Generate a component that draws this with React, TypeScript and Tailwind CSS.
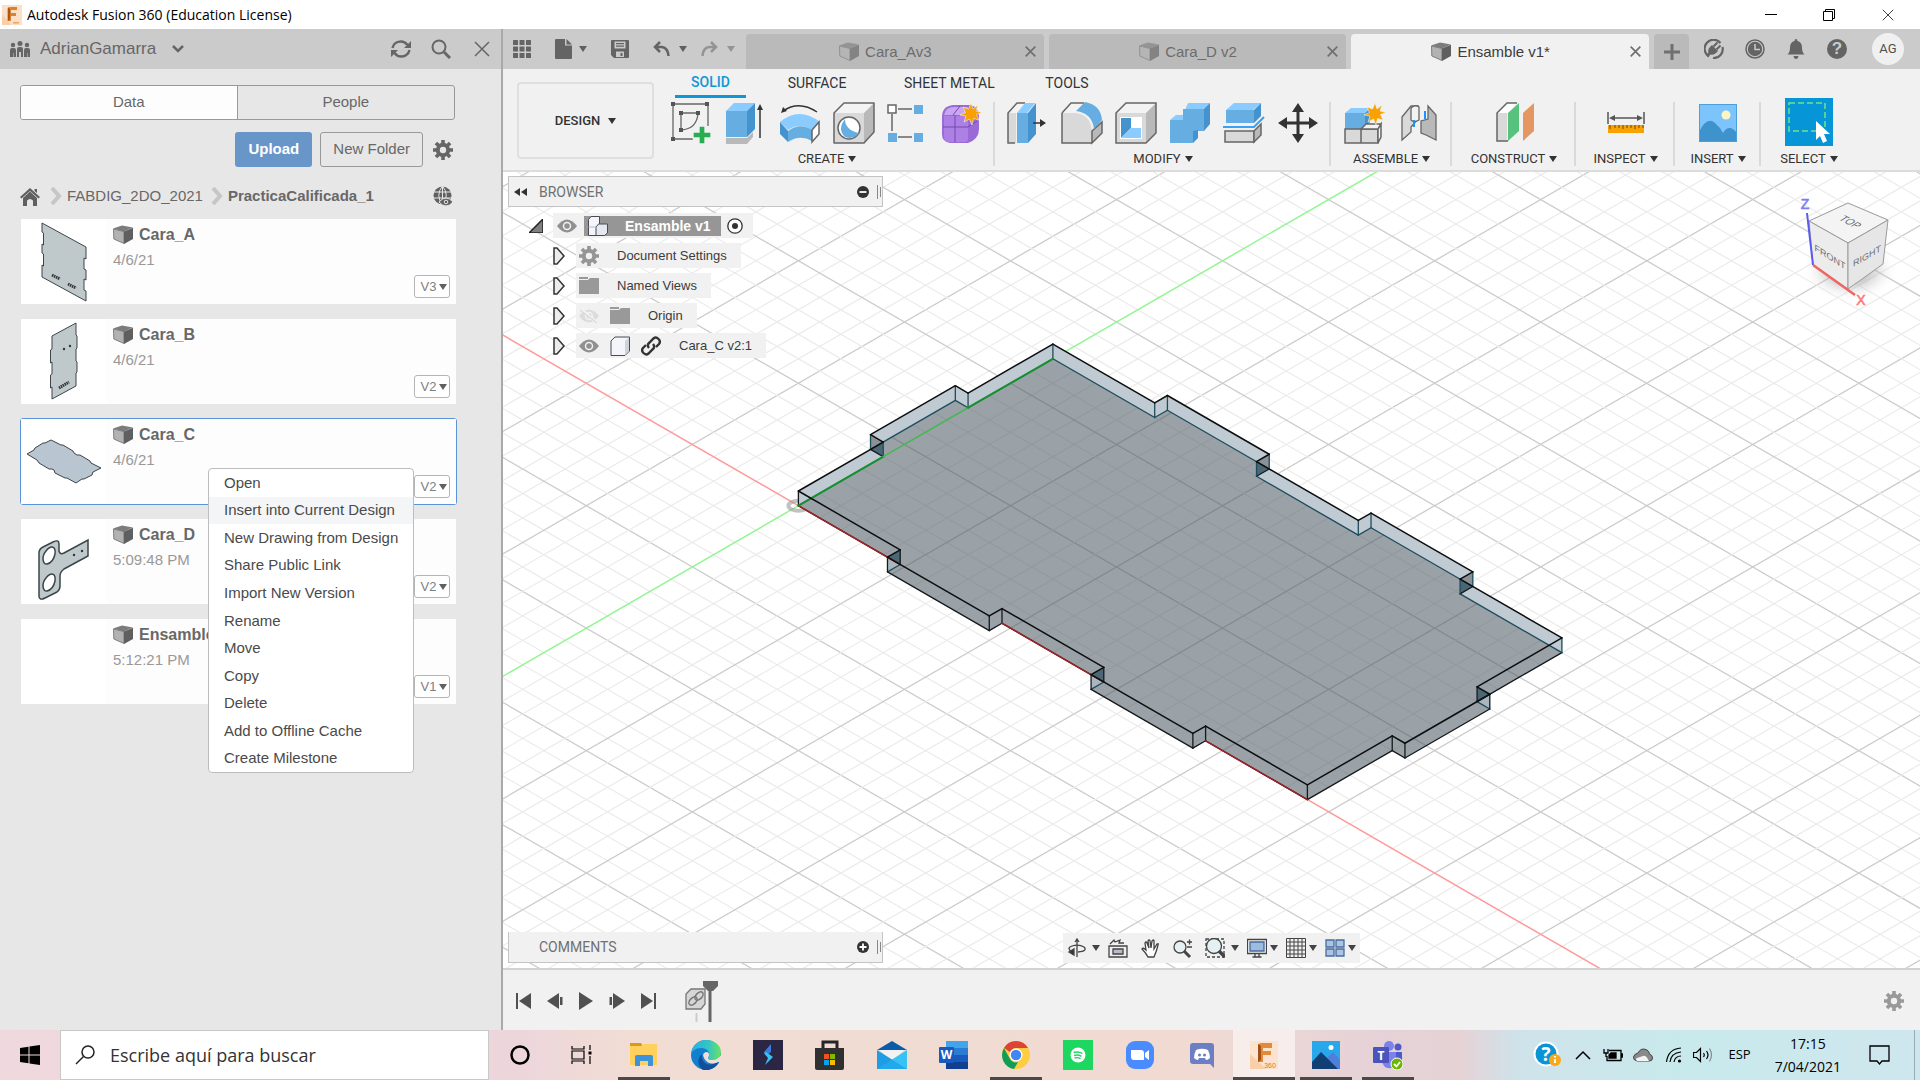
import React from "react";

/* ---------- shared bits ---------- */

const Caret = ({ className = "text-[#333]" }: { className?: string }) => (
  <svg viewBox="0 0 8 6" className={`w-2 h-1.5 shrink-0 ${className}`} fill="currentColor">
    <path d="M0 0h8L4 6z" />
  </svg>
);

const Cube = ({ faded = false }: { faded?: boolean }) => (
  <svg viewBox="0 0 20 20" className={`w-5 h-5 shrink-0 ${faded ? "opacity-60" : ""}`}>
    <path d="M0 3.5 9 .5l11 2-9 4z" fill="#7c7c7c" />
    <path d="M.5 4 11 6.5V18.5L.8 14z" fill="#b2b2b2" stroke="#6a6a6a" strokeWidth=".8" />
    <path d="M11 6.5 20 2.7V14l-9 5z" fill="#5f5f5f" />
  </svg>
);

const Cross = ({ className }: { className: string }) => (
  <svg viewBox="0 0 16 16" className={className} stroke="currentColor" fill="none">
    <path d="M1 1l14 14M15 1 1 15" />
  </svg>
);

const Gear = ({ className }: { className: string }) => (
  <svg viewBox="0 0 20 20" className={`w-5 h-5 shrink-0 ${className}`} fill="none" stroke="currentColor">
    <circle cx="10" cy="10" r="5.200" strokeWidth="4" />
    {[0, 45, 90, 135].map((a) => (
      <path key={a} d="M10 0v4M10 16v4" strokeWidth="3.600" transform={`rotate(${a} 10 10)`} />
    ))}
  </svg>
);

/* ---------- title bar ---------- */

const FusionLogo = ({ className }: { className: string }) => (
  <svg viewBox="0 0 20 20" className={className}>
    <rect width="20" height="20" fill="#fbdfc6" />
    <path d="M0 20V9l9 11z" fill="#f9cfa8" />
    <path d="M6 2.5 8.5 2H15v3H9v3h5v3H9v5H5.500V4z" fill="#d9822f" />
    <path d="M6 2.500 8 4v10l-2 2z" fill="#a8571a" />
    <path d="M11 17h6v1.500h-6z" fill="#f0a35e" />
  </svg>
);

const TitleBar = () => (
  <header className="flex h-[29px] items-center bg-white pl-0.5 font-['Open_Sans',sans-serif]">
    <FusionLogo className="w-5 h-5" />
    <h1 className="ml-[5px] text-sm text-black">Autodesk Fusion 360 (Education License)</h1>
    <div className="ml-auto flex">
      <button aria-label="Minimize" className="grid w-[62px] place-items-center">
        <svg viewBox="0 0 12 12" className="w-3 h-3"><path d="M0 5.500h12" stroke="#000" /></svg>
      </button>
      <button aria-label="Restore" className="grid w-[54px] place-items-center">
        <svg viewBox="0 0 12 12" className="w-3 h-3" fill="none" stroke="#000"><path d="M.5 2.500h9v9h-9zM2.500 2V.5h9v9H10" /></svg>
      </button>
      <button aria-label="Close" className="grid w-16 place-items-center">
        <Cross className="w-3 h-3" />
      </button>
    </div>
  </header>
);

/* ---------- data panel ---------- */

const thumbStyle = { fill: "#bfc9cc", stroke: "#3c4548", strokeWidth: 1 };

const ThumbA = () => (
  <g>
    <path {...thumbStyle} d="M21 4l44 24v12l-2-1v11l2 1v10l-2-1v11l2 1v10L21 58V46l1.500 1V35l-1.500-1V25l1.500 1V14L21 13z" />
    <path d="M31 56l8 4M47 65l8 4" stroke="#333" strokeWidth="3" strokeDasharray="1.500 .7" />
  </g>
);
const ThumbB = () => (
  <g>
    <path {...thumbStyle} d="M31 17 55 4v12l1 1v12l-1 1v12l1 1v10l-1 1v13L31 80V68l-1.500 1V56l1.500-1V43l-1.500 1V31l1.500-1z" />
    <path d="M38 69l10-6" stroke="#333" strokeWidth="3" strokeDasharray="1.500 .7" />
    <circle cx="43" cy="30" r="1.200" fill="#333" />
    <circle cx="49" cy="27" r="1.200" fill="#333" />
  </g>
);
const ThumbC = () => (
  <path {...thumbStyle} fill="#b9c5d0" d="M6 35L13 31 14 29 22 24 24 24 30 21 40 26 42 26 52 32 53 34 56 36 59 36 69 42 70 44 80 49 72 53 71 56 63 60 61 60 55 64 46 59 44 59 34 54 33 51 31 50 28 50 18 44 16 41z" />
);
const ThumbD = () => (
  <g>
    <path {...thumbStyle} fillRule="evenodd" strokeWidth="1.500" d="M18 34q0-4 4-6l10-5q6-3 6 2v7q1 4 5 2l24-13v16L43 50q-4 3-4 7v10q0 4-3 6l-12 6q-6 3-6-2zM34 35c1-8-4-9-9-3s-3 14 1 13 7-5 8-10zM34 62c1-8-4-9-9-3s-3 14 1 13 7-5 8-10z" />
    <circle cx="53" cy="36" r="1.200" fill="#333" />
    <circle cx="61" cy="32" r="1.200" fill="#333" />
  </g>
);

const files = [
  { name: "Cara_A", when: "4/6/21", version: "V3", thumb: <ThumbA /> },
  { name: "Cara_B", when: "4/6/21", version: "V2", thumb: <ThumbB /> },
  { name: "Cara_C", when: "4/6/21", version: "V2", thumb: <ThumbC />, selected: true },
  { name: "Cara_D", when: "5:09:48 PM", version: "V2", thumb: <ThumbD /> },
  { name: "Ensamble", when: "5:12:21 PM", version: "V1", thumb: null },
];

const menuItems = [
  "Open",
  "Insert into Current Design",
  "New Drawing from Design",
  "Share Public Link",
  "Import New Version",
  "Rename",
  "Move",
  "Copy",
  "Delete",
  "Add to Offline Cache",
  "Create Milestone",
];

const ContextMenu = () => (
  <div role="menu" className="absolute left-[187px] top-[49px] z-10 flex h-[305px] w-[206px] flex-col rounded-sm border border-[#bdbdbd] bg-white text-[#4a4a4a]">
    {menuItems.map((item) => (
      <button
        key={item}
        role="menuitem"
        className={`flex-1 px-[15px] text-left text-[15px] leading-5 whitespace-nowrap ${item === "Insert into Current Design" ? "bg-[#f3f5f7]" : ""}`}
      >
        {item}
      </button>
    ))}
  </div>
);

const Chevron = () => (
  <svg viewBox="0 0 12 18" className="w-3 h-[18px] shrink-0" fill="none" stroke="#c6c6c6" strokeWidth="4">
    <path d="M2 1l7 8-7 8" />
  </svg>
);

const DataPanel = () => (
  <aside className="flex w-[503px] shrink-0 flex-col border-r-2 border-[#a9a9a9] bg-[#e7e7e7] text-[#686868]">
    <div className="flex h-10 items-center bg-[#cbcbcb] pl-2.5 pr-[11px] text-[#666]">
      <svg viewBox="0 0 20 16" className="w-5 h-4" fill="currentColor">
        <circle cx="3" cy="4" r="2.200" /><circle cx="10" cy="2.500" r="2.500" /><circle cx="17" cy="4" r="2.200" />
        <path d="M0 16V9q0-2 2-2h2q2 0 2 2v7H4v-4h-.5v4zM7 16V8q0-2 2-2h2q2 0 2 2v8h-2v-5h-2v5zM14 16V9q0-2 2-2h2q2 0 2 2v7h-2v-4h-.5v4z" />
      </svg>
      <button className="ml-2.5 flex items-center text-[17px] leading-6">
        AdrianGamarra
        <svg viewBox="0 0 12 8" className="ml-4 w-3 h-2" fill="none" stroke="currentColor" strokeWidth="2.500"><path d="M1 1l5 5 5-5" /></svg>
      </button>
      <div className="ml-auto flex items-center gap-5">
        <button aria-label="Refresh">
          <svg viewBox="0 0 20 18" className="w-5 h-[18px]" fill="none" stroke="currentColor" strokeWidth="2.500">
            <path d="M1.500 8C2.500 3 7 1.500 10 1.500c3 0 5 1.500 6.500 3.500M18.500 10c-1 5-5.500 6.500-8.500 6.500-3 0-5-1.500-6.500-3.500" />
            <path d="M20 1v7h-7zM0 17v-7h7z" fill="currentColor" stroke="none" />
          </svg>
        </button>
        <button aria-label="Search">
          <svg viewBox="0 0 20 20" className="w-5 h-5" fill="none" stroke="currentColor" strokeWidth="2">
            <circle cx="8" cy="8" r="6.500" /><path d="M13 13l6 6" strokeWidth="3" />
          </svg>
        </button>
        <button aria-label="Close panel" className="ml-[3px]"><Cross className="w-4 h-4 stroke-[1.500]" /></button>
      </div>
    </div>

    <div className="pl-5 pr-[44px] pt-4">
      <div className="mr-0.5 grid h-[35px] grid-cols-2 overflow-hidden rounded-[3px] border border-[#999] text-[15px]">
        <button className="border-r border-[#999] bg-[#fdfdfd]">Data</button>
        <button>People</button>
      </div>
      <div className="mt-3 flex h-[35px] items-center justify-end gap-2 pr-1">
        <button className="h-[35px] rounded-[3px] bg-[#6896c8] px-[13px] text-[15px] font-bold text-white">Upload</button>
        <button className="h-[35px] rounded-[3px] border border-[#999] px-3 text-[15px]">New Folder</button>
        <button aria-label="Settings" className="ml-0.5"><Gear className="text-[#666]" /></button>
      </div>
      <nav className="mt-[17px] flex h-6 items-center text-[15px]">
        <a href="#home" aria-label="Home">
          <svg viewBox="0 0 20 18" className="mt-0.5 w-5 h-[18px]" fill="#606060">
            <path d="M10 0 20 9l-1.500 1.500L10 3 1.500 10.500 0 9zM14.500 1H17v4l-2.500-2z" /><path d="M10 3.500l7 6.500V18h-4v-5.500q-3-3-6 0V18H3V10z" />
          </svg>
        </a>
        <span className="ml-2.5"><Chevron /></span>
        <a href="#folder" className="ml-[5px]">FABDIG_2DO_2021</a>
        <span className="ml-2"><Chevron /></span>
        <a href="#subfolder" className="ml-[5px] font-bold">PracticaCalificada_1</a>
        <button aria-label="View on web" className="ml-auto mr-1">
          <svg viewBox="0 0 20 20" className="w-5 h-5">
            <circle cx="9.500" cy="9.500" r="9" fill="#606060" />
            <path d="M0 6h19M0 12h19M9.500 0v19M9.500 0Q2 9 9.500 19M9.500 0q7.500 9 0 19" stroke="#e7e7e7" fill="none" />
            <path d="M6 16q7-8 14 0-7 8-14 0z" fill="#606060" stroke="#e7e7e7" />
            <circle cx="13" cy="16" r="1.800" fill="#606060" stroke="#e7e7e7" />
          </svg>
        </button>
      </nav>
      <ul className="mt-[10px] flex flex-col gap-[13px]">
        {files.map((f) => (
          <li
            key={f.name}
            className={`relative flex h-[87px] rounded-[3px] border ${f.selected ? "border-[#5c93d6]" : "border-transparent"}`}
          >
            <svg viewBox="0 0 85 85" className="w-[85px] h-[85px] shrink-0 bg-white">{f.thumb}</svg>
            <div className="flex flex-1 flex-col bg-[#fdfdfd] pl-[7px] pt-[5px]">
              <div className="flex items-center gap-[6px] text-base leading-[22px] font-bold text-[#686868]"><Cube />{f.name}</div>
              <div className="mt-[4px] text-[15px] leading-5 text-[#999]">{f.when}</div>
            </div>
            <button className="absolute right-[6px] bottom-[6px] flex h-[23px] w-9 items-center justify-center gap-[3px] rounded-[3px] border border-[#b5b5b5] bg-white pl-1 text-[13px] text-[#808080]">
              {f.version}<Caret className="text-[#606060]" />
            </button>
            {f.selected && <ContextMenu />}
          </li>
        ))}
      </ul>
    </div>
  </aside>
);

/* ---------- document tabs ---------- */

const DocTab = ({ name, active = false }: { name: string; active?: boolean }) => (
  <div className={`flex h-[35px] min-w-0 flex-1 items-center rounded-t-[4px] pr-2 ${active ? "bg-[#f1f1f1] text-[#3c3c3c]" : "bg-[#bababa] text-[#6c6c6c]"}`}>
    <button className="flex flex-1 items-center justify-center gap-[6px] text-[15px] leading-5 whitespace-nowrap">
      <Cube faded={!active} />{name}
    </button>
    <button aria-label={`Close ${name}`} className="text-[#707070]"><Cross className="w-[11px] h-[11px] stroke-[2.500]" /></button>
  </div>
);

const TabBar = () => (
  <div className="flex h-10 items-end bg-[#cbcbcb] text-[#646464]">
    <div className="flex h-10 w-[243px] shrink-0 items-center pl-2.5">
      <button aria-label="Data panel">
        <svg viewBox="0 0 18 18" className="w-[18px] h-[18px]" fill="currentColor">
          {[0, 6.500, 13].map((x) => [0, 6.500, 13].map((y) => <rect key={`${x}-${y}`} x={x} y={y} width="5" height="5" rx=".5" />))}
        </svg>
      </button>
      <button aria-label="File" className="ml-6 flex items-center gap-[7px]">
        <svg viewBox="0 0 17 20" className="w-[17px] h-5" fill="currentColor"><path d="M1 0h9v6.500h7V19q0 1-1 1H1q-1 0-1-1V1q0-1 1-1zM11.500 0 17 5.500h-5.500z" /></svg>
        <Caret className="text-[#606060]" />
      </button>
      <button aria-label="Save" className="ml-6">
        <svg viewBox="0 0 18 18" className="w-[18px] h-[18px]" fill="currentColor"><path fillRule="evenodd" d="M1 0h16q1 0 1 1v16q0 1-1 1H3l-3-3V1q0-1 1-1zm2.500 1.500v7h11v-7zM5 11.500V17h8v-5.500zM5 3h8v1.300H5zm0 2.500h8v1.300H5zM9.500 13h2v3h-2z" /></svg>
      </button>
      <button aria-label="Undo" className="ml-6 flex items-center gap-[9px]">
        <svg viewBox="0 0 17 16" className="w-[17px] h-4" fill="none" stroke="currentColor" strokeWidth="2.500"><path d="M7 1 2 6l5 5M2 6h7q6 1 6.500 9" /></svg>
        <Caret className="text-[#606060]" />
      </button>
      <button aria-label="Redo" className="ml-3.5 flex items-center gap-[9px] text-[#949494]">
        <svg viewBox="0 0 17 16" className="w-[17px] h-4" fill="none" stroke="currentColor" strokeWidth="2.500"><path d="M10 1l5 5-5 5M15 6H8q-6 1-6.500 9" /></svg>
        <Caret className="text-[#949494]" />
      </button>
    </div>
    <div className="flex min-w-0 flex-1 gap-[5px]">
      <DocTab name="Cara_Av3" />
      <DocTab name="Cara_D v2" />
      <DocTab name="Ensamble v1*" active />
      <button aria-label="New tab" className="grid h-[35px] w-[35px] shrink-0 place-items-center rounded-t-[4px] bg-[#bababa]">
        <svg viewBox="0 0 16 16" className="w-4 h-4" stroke="#707070" strokeWidth="3"><path d="M8 0v16M0 8h16" /></svg>
      </button>
    </div>
    <div className="flex h-10 shrink-0 items-center gap-[21px] pr-4 pl-[15px]">
      <button aria-label="Extensions">
        <svg viewBox="0 0 20 20" className="w-5 h-5"><path d="M5 17.500A9 9 0 1 1 16.500 4M18.500 8A9 9 0 0 1 9 19" fill="none" stroke="currentColor" strokeWidth="2.200" />
          <path d="M5 15q-2-4 1-7l2-2 6 6-2 2q-3 3-7 1z" fill="currentColor" /><path d="M9.500 7.500 13.500 3.500M12.500 10.500l4-4" stroke="currentColor" strokeWidth="2" /><path d="M3 17l4-4" stroke="currentColor" strokeWidth="2.500" /></svg>
      </button>
      <button aria-label="Job status">
        <svg viewBox="0 0 20 20" className="w-5 h-5" fill="none"><circle cx="10" cy="10" r="9" stroke="currentColor" strokeWidth="1.500" /><circle cx="10" cy="10" r="7.200" fill="currentColor" /><path d="M10 5v5.500h5" stroke="#cbcbcb" strokeWidth="1.500" /></svg>
      </button>
      <button aria-label="Notifications">
        <svg viewBox="0 0 20 20" className="w-5 h-5" fill="currentColor"><path d="M10 0q1.500 0 1.500 2 4.500 1 4.500 6.500 0 5 2.500 7h-17q2.500-2 2.500-7Q4 3 8.500 2 8.500 0 10 0zM7.500 17h5q-.5 3-2.500 3t-2.500-3z" /></svg>
      </button>
      <button aria-label="Help" className="grid h-5 w-5 place-items-center rounded-full bg-[#646464] text-[17px] leading-5 font-bold text-[#cbcbcb]">?</button>
      <button className="ml-1 grid h-8 w-8 place-items-center rounded-full bg-[#f0f0f0] font-['Roboto',sans-serif] text-[13px] text-[#505050]">AG</button>
    </div>
  </div>
);

/* ---------- ribbon icons, all on a 42 x 42 grid ---------- */

const B1 = "#8accff";
const B2 = "#66aee2";
const B3 = "#4493cf";
const G1 = "#f3f3f3";
const G2 = "#d9d9d9";
const G3 = "#b9b9b9";
const LN = "#666";

const Star = ({ x, y }: { x: number; y: number }) => (
  <path transform={`translate(${x} ${y})`} fill="#f9a100" stroke="#f1f1f1" strokeWidth=".6" d="M0-11l2 6 5-4-2 6 6 1.500-5.500 2L8 6 2.500 4.500 1 11l-2.500-6L-7 8l2-6-6-1 5.500-2.500L-8-7l5.500 2z" />
);

const ribbonIcons: Record<string, React.ReactNode> = {
  sketch: (<g fill="none" stroke={LN} strokeWidth="1.300"><path d="M2 2h35v22M2 2v35h20M10 11h17q-1 16-17 17z" /><path d="M0 0h4v4H0zM34 0h4v4h-4zM0 35h4v4H0zM8 9h4v4H8zM25 9h4v4h-4zM8 26h4v4H8z" fill="#555" stroke="none" /><path d="M28 24h6v6h6v6h-6v6h-6v-6h-6v-6h6z" fill="#27ae50" stroke="#f1f1f1" /></g>),
  extrude: (<g><path d="M1 36h21l6-6v5l-6 7H1z" fill={G3} /><path d="M1 9l8-8h21l-8 8z" fill={B1} /><path d="M1 9h21v26H1z" fill={B2} /><path d="M22 9l8-8v26l-8 8z" fill={B3} /><path d="M35 36V5" stroke="#333" strokeWidth="1.500" /><path d="M32 8l3-6 3 6z" fill="#333" /></g>),
  revolve: (<g><path d="M1 20Q20 4 41 20l-8 8q-12-8-24 0z" fill={B1} /><path d="M1 20l8 9v11l-8-8z" fill={B3} /><path d="M9 29q12-9 24-1v11q-12-7-24 1z" fill={B2} /><path d="M33 28l7-8v12l-7 8z" fill="#fff" stroke={LN} strokeWidth="1.500" /><path d="M4 9Q20-2 38 10" fill="none" stroke="#333" strokeWidth="1.500" /><path d="M2 11l2-6 4 4z" fill="#333" /></g>),
  hole: (<g stroke={LN} strokeWidth="1.500" strokeLinejoin="round"><path d="M1 11 11 1h30L31 11z" fill={G1} stroke="none" /><path d="M1 11h30v30H1z" fill={G2} stroke="none" /><path d="M31 11 41 1v29L31 41z" fill={G3} stroke="none" /><path d="M1 11 11 1h30v29L31 41H1z" fill="none" /><circle cx="16" cy="26" r="11" fill="#fff" /><path d="M12 17q0 11 14 14-5 7-14 4-8-8 0-18z" fill={B2} stroke="none" /></g>),
  pattern: (<g><path d="M11 7h14M5 12v17M11 35h14" stroke={LN} strokeWidth="1.500" /><path d="M1 3h8v8H1z" fill="#fff" stroke={LN} strokeWidth="1.500" /><path d="M27 3h9v9h-9zM1 31h9v9H1zM27 31h9v9h-9z" fill={B2} /></g>),
  form: (<g><path d="M1 15Q1 4 12 3h17q9 2 9 12v12q0 10-11 14H9Q1 40 1 32z" fill="#9a6bd6" /><path d="M3 16q0-11 10-11h14l-3 8H3z" fill="#c9a6f3" /><path d="M3 14h21q3 0 3 3v20q0 3-4 3H8q-5 0-5-6z" fill="#ad80e6" /><path d="M2 25h25l9-6M14 13v27M12 13l7-9" stroke="#7448b0" fill="none" /><Star x={30} y={12} /></g>),
  presspull: (<g><path d="M1 11 10 1h9l-8 10z" fill={G1} /><path d="M1 11h8v30H1z" fill={G2} /><path d="M8 41H1V11L10 1h8" stroke={LN} strokeWidth="1.500" fill="none" /><path d="M10 11l8-10h10l-8 10z" fill={B1} /><path d="M10 11h11v30H10z" fill={B2} /><path d="M21 11l8-10v31l-8 9z" fill={B3} /><path d="M26 21h9" stroke="#333" strokeWidth="1.500" /><path d="M33 17l6 4-6 4z" fill="#333" /></g>),
  fillet: (<g stroke={LN} strokeWidth="1.500"><path d="M1 11 10 1h13l8 25-10 15H1z" fill={G1} stroke="none" /><path d="M1 11h14q14 2 16 17v13H1z" fill={G2} stroke="none" /><path d="M31 29 41 20v11L31 41z" fill={G3} /><path d="M1 11 10 1h13M1 11v30h30" fill="none" /><path d="M15 9l9-9q16 3 17 18l-8 9Q31 11 15 9z" fill={B2} stroke="none" /></g>),
  shell: (<g stroke={LN} strokeWidth="1.500"><path d="M1 11 11 1h30L31 11z" fill={G1} stroke="none" /><path d="M1 11h30v30H1z" fill={G2} stroke="none" /><path d="M31 11 41 1v30L31 41z" fill={G3} stroke="none" /><path d="M1 11 11 1h30v30L31 41H1z" fill="none" /><path d="M5 15h22v22H5z" fill="#fff" stroke="none" /><path d="M6 16h10v10L6 36z" fill={B3} stroke="none" /><path d="M6 36l10-10h10v10z" fill={B1} stroke="none" /></g>),
  combine: (<g><path d="M1 18l6-5h7l5-12h22l-6 7H20l-5 10z" fill={B1} /><path d="M1 18h13V7h21v22H24v12H1z" fill={B2} /><path d="M35 7l6-6v21l-6 7zM24 29l5-1v8l-5 5z" fill={B3} /></g>),
  split: (<g><path d="M3 8l8-7h27l-8 7z" fill={B1} /><path d="M3 8h28v13H3z" fill={B2} /><path d="M31 8l7-7v13l-7 7z" fill={B3} /><path d="M2 29h29v11H2z" fill={G2} stroke={LN} strokeWidth="1.500" /><path d="M31 29l7-7v11l-7 7z" fill={G3} stroke={LN} strokeWidth="1.500" /><path d="M0 25h31l10-10" stroke="#3f9ff0" strokeWidth="2" fill="none" /></g>),
  move: (<g fill="#333"><path d="M21 1l6 9H15zM21 41l6-9H15zM1 21l9-6v12zM41 21l-9-6v12z" /><path d="M19.500 8h3v26h-3zM8 19.500h26v3H8z" /></g>),
  component: (<g><path d="M1 11l6-5h18l-4 5z" fill={B1} /><path d="M1 11h20v16H1z" fill={B2} /><path d="M21 11l5-5v14l-5 6z" fill={B3} /><path d="M1 27h16v14H1zM17 27h17v14H17z" fill={G2} stroke={LN} strokeWidth="1.500" /><path d="M17 27l5-5h15l-3 5zM34 27l3-5v13l-3 6z" fill={G1} stroke={LN} strokeWidth="1.500" /><Star x={31} y={12} /></g>),
  joint: (<g stroke={LN} strokeWidth="1.300"><path d="M4 15 13 4h7v13l-7 8v5L4 38z" fill={G2} /><path d="M13 6q4-4 8-1v13q-5 3-8 0z" fill={G1} /><path d="M38 38V13L30 4v13l-7 2v12l5 2z" fill={G3} /><path d="M16 18v7M27 9v8" stroke="#1e90ff" strokeWidth="2" /></g>),
  plane: (<g><path d="M4 11 14 1h9l-8 10z" fill="#fff" /><path d="M4 11h10v28H4z" fill={G2} /><path d="M15 39H4V11L14 1h10" fill="none" stroke={LN} strokeWidth="1.500" /><path d="M15 11 26 1v28L15 39z" fill="#57c17e" /><path d="M30 11 41 1v28L30 39z" fill="#e59763" /></g>),
  measure: (<g><path d="M3 10v12M39 10v12M6 16h30" stroke="#555" strokeWidth="1.500" /><path d="M4 16l6-3v6zM38 16l-6-3v6z" fill="#555" /><path d="M3 23h36v8H3z" fill="#f9a100" /><path d="M5 23v4M10 23v3M14 23v3M18 23v4M22 23v3M26 23v3M30 23v4M34 23v3M38 23v3" stroke="#704a00" /></g>),
  image: (<g><path d="M2 2h38v38H2z" fill="#7cc4fb" /><path d="M2 30q8-16 16-9 5 4 8 10 6-10 14 0v9H2z" fill="#3e93cd" /><circle cx="29" cy="13" r="4.500" fill="#fdf6c4" /><path d="M2.500 2.500h37v37h-37z" fill="none" stroke="#4c9fd8" /></g>),
  select: (<g><path d="M1 1h36v28H1z" fill="none" stroke="#6fe38a" strokeWidth="1.500" strokeDasharray="6 3" /><path d="M28 19v19l4-4 3 7 4-2-3-7h6z" fill="#fff" /></g>),
};

const ribbonGroups = [
  { label: "CREATE", width: "w-[326px] pr-2.5", icons: ["sketch", "extrude", "revolve", "hole", "pattern", "form"] },
  { label: "MODIFY", width: "w-[336px]", icons: ["presspull", "fillet", "shell", "combine", "split", "move"] },
  { label: "ASSEMBLE", width: "w-[121px]", icons: ["component", "joint"] },
  { label: "CONSTRUCT", width: "w-[124px]", icons: ["plane"] },
  { label: "INSPECT", width: "w-[99px]", icons: ["measure"] },
  { label: "INSERT", width: "w-[86px]", icons: ["image"] },
  { label: "SELECT", width: "w-[96px]", icons: ["select"] },
];

const Ribbon = () => (
  <div className="flex h-[103px] border-b-2 border-[#dcdcdc] bg-[#f1f1f1] font-['Roboto',sans-serif] text-[13px] text-[#333]">
    <button className="mt-[13px] ml-3.5 flex h-[77px] w-[137px] shrink-0 items-center justify-center gap-2 rounded-[4px] border-2 border-[#dfdfdf] font-medium">
      DESIGN <Caret />
    </button>
    <div className="ml-[15px] flex flex-col">
      <nav className="flex h-[30px] items-stretch text-sm">
        <button className="ml-[6px] w-[71px] border-b-[3px] border-[#0f96d7] font-medium text-[#0f96d7]">SOLID</button>
        <button className="ml-10 w-[62px] pb-0.5">SURFACE</button>
        <button className="ml-14 w-[86px] pb-0.5 whitespace-nowrap">SHEET METAL</button>
        <button className="ml-[54px] w-[46px] pb-0.5">TOOLS</button>
      </nav>
      <div className="flex">
        {ribbonGroups.map((g, i) => (
          <div key={g.label} className={`relative flex shrink-0 flex-col items-center ${g.width}`}>
            <div className="flex gap-[6px]">
              {g.icons.map((name) => (
                <button key={name} aria-label={name} className={`grid h-12 w-12 place-items-center ${name === "select" ? "bg-[#0696d7]" : ""}`}>
                  <svg viewBox="0 0 42 42" className="mt-px w-[42px] h-[42px] overflow-visible">{ribbonIcons[name]}</svg>
                </button>
              ))}
            </div>
            <button className="flex h-6 items-center gap-1 pt-0.5 leading-[22px]">{g.label}<Caret /></button>
            {i < ribbonGroups.length - 1 && <span className="absolute top-1 right-0 h-16 w-0.5 bg-[#dadada]" />}
          </div>
        ))}
      </div>
    </div>
  </div>
);

/* ---------- 3D scene ---------- */

// One millimetre on the model is MM pixels; the model's axes run at 30 degrees.
const MM = 2.449;
const OX = 798.4;
const OY = 505.7;
type P = [number, number];
const pt = (u: number, v: number, h = 0): P => [OX + (u + v) * MM * 0.866, OY + (u - v) * MM * 0.5 - h * MM];
const str = (ps: P[]) => ps.map((p) => `${p[0].toFixed(1)},${p[1].toFixed(1)}`).join(" ");

const outline: P[] = [
  [0, 0], [48, 0], [48, -6], [96, -6], [96, 0], [144, 0], [144, -6], [192, -6], [192, 0], [240, 0],
  [240, 40], [246, 40], [246, 80], [240, 80], [240, 120],
  [192, 120], [192, 126], [144, 126], [144, 120], [96, 120], [96, 126], [48, 126], [48, 120], [0, 120],
  [0, 80], [-6, 80], [-6, 40], [0, 40],
];
const bottom = outline.map(([u, v]) => pt(u, v));
const top = outline.map(([u, v]) => pt(u, v, 6));
const edges = outline.map((a, i) => {
  const j = (i + 1) % outline.length;
  const b = outline[j];
  const front = b[0] > a[0] || b[1] > a[1];
  return { i, j, front };
});
// Short tab sides that are turned away from the eye: [inner u, inner v, outer u, outer v, outer height]
const darkSides = [
  [0, 40, -6, 40, 0], [48, 0, 48, -6, 6], [144, 0, 144, -6, 6],
  [96, 120, 96, 126, 0], [192, 120, 192, 126, 0], [240, 80, 246, 80, 6],
];

const gridIndexes = Array.from({ length: 161 }, (_, i) => i - 80);
const Grid = ({ overlay = false }: { overlay?: boolean }) => (
  <g>
    {gridIndexes.filter((k) => k !== 0).map((k) => {
      const a = pt(k * 10, -1200), b = pt(k * 10, 1200), c = pt(-1200, k * 10), d = pt(1200, k * 10);
      const major = k % 5 === 0;
      const stroke = overlay ? (major ? "#848b8d" : "#939a9e") : major ? "#cccccc" : "#ebebeb";
      return (
        <path key={k} d={`M${a}L${b}M${c}L${d}`} stroke={stroke} strokeWidth={major ? 1.300 : 1.200} />
      );
    })}
  </g>
);

const Line = ({ a, b, c, w = 1.300 }: { a: P; b: P; c: string; w?: number }) => (
  <path d={`M${a}L${b}`} stroke={c} strokeWidth={w} strokeLinecap="round" />
);

const Scene = () => (
  <svg viewBox="503 172 1417 796" preserveAspectRatio="xMinYMin slice" className="absolute inset-0 h-full w-full" fill="none">
    <defs>
      <clipPath id="plate"><polygon points={str(bottom)} /></clipPath>
      <radialGradient id="shade"><stop offset=".3" stopColor="#888" stopOpacity=".6" /><stop offset="1" stopColor="#fff" stopOpacity="0" /></radialGradient>
    </defs>
    <Grid />
    <Line a={pt(-400, 0)} b={pt(700, 0)} c="#ff9a9a" w={1.500} />
    <Line a={pt(0, -400)} b={pt(0, 700)} c="#93f593" w={1.500} />
    <ellipse cx={OX} cy={OY} rx="10" ry="5" stroke="#999" strokeOpacity=".6" strokeWidth="4" />
    <polygon points={str(top)} fill="#bfcad2" />
    {edges.filter((e) => e.front).map((e) => (
      <polygon key={e.i} points={str([bottom[e.i], bottom[e.j], top[e.j], top[e.i]])} fill="#9ca3a5" />
    ))}
    {edges.filter((e) => !e.front).map((e) => (
      <polygon key={e.i} points={str([bottom[e.i], bottom[e.j], top[e.j], top[e.i]])} fill="#bfcad2" />
    ))}
    <polygon points={str(bottom)} fill="#9aa2a8" />
    <g clipPath="url(#plate)"><Grid overlay /></g>
    {darkSides.map(([a, b, c, d, h]) => (
      <g key={`${a}-${b}`}>
        <polygon points={str([pt(a, b), pt(a, b, 6), pt(c, d, h)])} fill="#4b6674" />
        <polygon points={str([pt(c, d), pt(c, d, 6), pt(a, b, 6 - h)])} fill={h ? "#a9b7bf" : "#8b9295"} />
      </g>
    ))}
    {edges.map((e) => <Line key={`b${e.i}`} a={bottom[e.i]} b={bottom[e.j]} c={e.front ? "#15191b" : "#1d4c5c"} />)}
    {edges.map((e) => <Line key={`v${e.i}`} a={bottom[e.i]} b={top[e.i]} c={e.i < 14 ? "#15191b" : "#1d4c5c"} />)}
    {[0, 96, 192].map((u) => <Line key={u} a={pt(u, 0)} b={pt(u + 48, 0)} c="#9c2328" w={1.500} />)}
    <Line a={pt(0, 0)} b={pt(0, 40)} c="#15912f" w={2} />
    <Line a={pt(0, 40)} b={pt(0, 80)} c="#45b854" w={1.500} />
    <Line a={pt(0, 80)} b={pt(0, 120)} c="#15912f" w={2} />
    {edges.map((e) => <Line key={`t${e.i}`} a={top[e.i]} b={top[e.j]} c="#0c0e0f" w={1.500} />)}

    {/* orientation cube */}
    <ellipse cx="1850" cy="270" rx="48" ry="32" fill="url(#shade)" />
    <g stroke="#9a9a9a">
      <path d="M1848 203l40 17-40 23-39-22z" fill="#f4f4f4" />
      <path d="M1809 221l39 22v46l-35-24z" fill="#ececec" />
      <path d="M1848 243l40-23-5 44-35 25z" fill="#e6e6e6" />
    </g>
    <path d="M1807 213l6 52" stroke="#5a5af0" strokeWidth="2" />
    <path d="M1813 265l42 30" stroke="#f06464" strokeWidth="2.500" />
    <g fontFamily="Liberation Sans, sans-serif" textAnchor="middle">
      <text x="1805" y="209" fontSize="14" fill="#7c7cf5" stroke="#7c7cf5" strokeWidth=".6">Z</text>
      <text x="1861" y="305" fontSize="14" fill="#ff7a7a" stroke="#ff7a7a" strokeWidth=".6">X</text>
      <g fontSize="9" fill="#6d7074">
        <text transform="translate(1847 224) rotate(28) skewX(-30)" fontSize="10">TOP</text>
        <text transform="translate(1830 260) skewY(32)">FRONT</text>
        <text transform="translate(1867 259) skewY(-30)">RIGHT</text>
      </g>
    </g>
  </svg>
);

/* ---------- browser tree ---------- */

const Eye = ({ off = false }: { off?: boolean }) => (
  <svg viewBox="0 0 20 14" className="w-5 h-3.5 shrink-0">
    <path d="M0 7q10-13 20 0-10 13-20 0z" fill={off ? "#dcdcdc" : "#909090"} />
    <circle cx="10" cy="7" r="3.500" fill={off ? "#dcdcdc" : "#909090"} stroke="#f1f1f1" strokeWidth="1.500" />
    {off && <path d="M2 0l16 14" stroke="#f1f1f1" strokeWidth="3" />}
    {off && <path d="M1 1l17 13" stroke="#d0d0d0" />}
  </svg>
);
const Folder = () => (
  <svg viewBox="0 0 20 17" className="w-5 h-[17px] shrink-0" fill="#999"><path d="M0 0h9v2H0zM0 3h9l2-2h9v16H0z" /></svg>
);
const LinkIcon = () => (
  <svg viewBox="0 0 20 20" className="w-5 h-5 shrink-0" fill="none" stroke="#333" strokeWidth="2.400">
    <path d="M8 12Q5.500 9 8.500 6.500l4-4Q15 .5 17.500 3t.5 5l-3 3" /><path d="M12 8q2.500 3-.5 5.500l-4 4Q5 19.500 2.500 17T2 12l3-3" />
  </svg>
);
const Body = () => (
  <svg viewBox="0 0 20 20" className="w-5 h-5 shrink-0" stroke="#4a4a55" strokeLinejoin="round"><path d="M1 5 5 1h14.500v14l-4.500 4.500H1z" fill="#f4f5fa" /><path d="M15 5v14l4-4V1.500z" fill="#cfd2dc" stroke="none" /></svg>
);
const Assembly = () => (
  <svg viewBox="0 0 20 20" className="w-5 h-5 shrink-0" stroke="#4a4a55" strokeLinejoin="round"><path d="M.5 3.500 3 .5h8.500v10l-2 9h-9z" fill="#f4f5fa" /><path d="M8 19.500V11l2.500-3h9v9l-3 2.500z" fill="#e6e8f0" /><path d="M.5 11h8" stroke="#b5b8c4" /></svg>
);
const Expander = () => (
  <button aria-label="Expand" className="w-[23px] shrink-0">
    <svg viewBox="0 0 12 18" className="w-3 h-[18px]" fill="#ececec" stroke="#333" strokeWidth="1.500"><path d="M1 1h3l7 8-7 8H1z" /></svg>
  </button>
);
const Grip = () => (
  <svg viewBox="0 0 4 14" className="ml-2 w-1 h-3.5" stroke="#888"><path d="M.5 0v14M3.500 2v10" /></svg>
);

const tree = [
  { label: "Document Settings", icons: <Gear className="text-[#959595]" /> },
  { label: "Named Views", icons: <Folder /> },
  { label: "Origin", icons: <><Eye off /><Folder /></> },
  { label: "Cara_C v2:1", icons: <><Eye /><Body /><LinkIcon /></> },
];

const Browser = () => (
  <div className="relative w-[375px] text-[#3c3c3c]">
    <div className="flex h-[31px] items-center border border-[#c4c4c4] bg-[#f1f1f1] pr-px pl-[5px] font-['Roboto',sans-serif] text-sm text-[#707070]">
      <button aria-label="Collapse"><svg viewBox="0 0 13 8" className="w-[13px] h-2" fill="#333"><path d="M6 0v8L0 4zM13 0v8L7 4z" /></svg></button>
      <span className="ml-3">BROWSER</span>
      <button aria-label="Minimize browser" className="ml-auto"><svg viewBox="0 0 12 12" className="w-3 h-3"><circle cx="6" cy="6" r="6" fill="#333" /><path d="M2.500 6h7" stroke="#fff" strokeWidth="1.800" /></svg></button>
      <Grip />
    </div>
    <ul className="mt-[6px] flex flex-col gap-[5px] text-[13px]">
      <li className="flex h-[25px] items-center pl-[21px]">
        <button aria-label="Collapse Ensamble v1" className="w-6"><svg viewBox="0 0 14 14" className="w-3.5 h-3.5"><path d="M14 0v14H0z" fill="#808080" stroke="#222" strokeWidth="1.500" /></svg></button>
        <div className="flex h-[25px] items-center bg-[#f1f1f1] pr-2.5 pl-1">
          <Eye />
          <button className="ml-[7px] flex h-5 items-center bg-[#969696] pr-2.5 pl-1 text-sm font-bold text-white"><Assembly /><span className="ml-[17px]">Ensamble v1</span></button>
          <svg viewBox="0 0 16 16" className="ml-[6px] w-4 h-4"><circle cx="8" cy="8" r="7.200" fill="#fff" stroke="#333" strokeWidth="1.300" /><circle cx="8" cy="8" r="3" fill="#333" /></svg>
        </div>
      </li>
      {tree.map((n) => (
        <li key={n.label} className="flex h-[25px] items-center pl-[45px]">
          <Expander />
          <div className="flex h-[25px] items-center gap-[11px] bg-[#f1f1f1] pr-3.5 pl-[3px]">
            {n.icons}
            <span className="pl-[7px]">{n.label}</span>
          </div>
        </li>
      ))}
    </ul>
  </div>
);

/* ---------- navigation bar ---------- */

const ic = { fill: "none", stroke: "#444", strokeWidth: 1.300 };
const navTools = [
  { name: "Orbit", gap: "ml-1", caret: "ml-[5px]", art: (<g {...ic}><path d="M10 1v18M8 4l2-3 2 3" /><path d="M5 14Q-1 10 5 8q7-2 12 1 4 4-6 5" /><path d="M7 11v6l-5-3z" fill="#333" /></g>) },
  { name: "Look at", gap: "ml-2", art: (<g {...ic}><path d="M1 8h18v11H1z" fill="#eee" /><path d="M5 11h10v5H5z" fill="#b8bcc4" /><path d="M2 6l4-4 1 2 5-2-1 3h5" /></g>) },
  { name: "Pan", gap: "ml-[13px]", art: (<g {...ic}><path d="M7 19q-2-4-6-8 1-2 4 1L4 5q1-2 2 0l2 5-1-7q1-2 2 0l1 7 1-7q2-2 2 0v8l3-5q2-1 1 1-1 5-4 12z" fill="#fff" /></g>) },
  { name: "Zoom", gap: "ml-3", art: (<g {...ic}><circle cx="7" cy="9" r="6" fill="#e4f0f2" /><path d="M11 13l6 6" strokeWidth="3" /><path d="M14 4h5M16.500 1.500v5M14 9h5" /></g>) },
  { name: "Fit", gap: "ml-3", caret: "ml-1.5", art: (<g {...ic}><path d="M1 1h18v18H1z" strokeDasharray="3 2" /><circle cx="9" cy="8" r="7.500" fill="#e4f0f2" /><path d="M14 13l6 6" strokeWidth="3.500" /></g>) },
  { name: "Display", gap: "ml-2", caret: "ml-[3px]", art: (<g {...ic}><path d="M.5 1.500h19v14H.5z" fill="#f8f8f8" /><path d="M3 4h14v9H3z" fill="#9cbde0" stroke="#456a9c" /><path d="M8 16v3H5.500M12 16v3h2.500M6 19h8" /></g>) },
  { name: "Grid", gap: "ml-2", caret: "ml-[3px]", art: (<g {...ic} strokeWidth="1"><path d="M.5.5h19v19H.5zM4 .5v19M8 .5v19M12 .5v19M16 .5v19M.5 4h19M.5 8h19M.5 12h19M.5 16h19" /></g>) },
  { name: "Viewports", gap: "ml-2", caret: "ml-[3px]", art: (<g fill="#a9c4e6" stroke="#4a6c9c" strokeWidth="1.300"><path d="M1 2h8v7H1zM11 2h8v7h-8zM1 11h8v7H1zM11 11h8v7h-8z" /></g>) },
];

const NavBar = () => (
  <div className="flex h-[30px] items-center bg-[#f1f1f1] pr-1">
    {navTools.map((t) => (
      <button key={t.name} aria-label={t.name} className={`flex items-center ${t.gap}`}>
        <svg viewBox="0 0 20 20" className="w-5 h-5">{t.art}</svg>
        {t.caret && <span className={t.caret}><Caret className="text-[#444]" /></span>}
      </button>
    ))}
  </div>
);

const Viewport = () => (
  <main className="relative flex flex-1 flex-col bg-white pt-1 pb-[5px] pl-[5px]">
    <Scene />
    <Browser />
    <div className="relative mt-auto flex items-end">
      <div className="flex h-[31px] w-[375px] items-center border border-t-0 border-[#c4c4c4] bg-[#f1f1f1] pr-px pl-[30px] font-['Roboto',sans-serif] text-sm text-[#707070]">
        COMMENTS
        <button aria-label="Expand comments" className="ml-auto"><svg viewBox="0 0 12 12" className="w-3 h-3"><circle cx="6" cy="6" r="6" fill="#333" /><path d="M2.500 6h7M6 2.500v7" stroke="#fff" strokeWidth="1.800" /></svg></button>
        <Grip />
      </div>
      <div className="ml-[180px]"><NavBar /></div>
    </div>
  </main>
);

/* ---------- timeline ---------- */

const players = [
  { name: "Go to start", d: "M1 1h2v16H1zM16 1v16L4 9z" },
  { name: "Step back", d: "M13 1v16L1 9zM14 5h2.500v8H14z" },
  { name: "Play", d: "M2 0v18L16 9z" },
  { name: "Step forward", d: "M5 1v16l12-8zM1.500 5H4v8H1.500z" },
  { name: "Go to end", d: "M2 1v16l12-8zM15 1h2v16h-2z" },
];

const Timeline = () => (
  <footer className="flex h-[62px] items-center border-t-2 border-[#d2d2d2] bg-[#f1f1f1] pt-px pr-4 pl-3">
    <div className="flex gap-[13px]">
      {players.map((p) => (
        <button key={p.name} aria-label={p.name}>
          <svg viewBox="0 0 18 18" className="w-[18px] h-[18px]" fill="#505050"><path d={p.d} /></svg>
        </button>
      ))}
    </div>
    <svg viewBox="0 0 34 42" className="mt-0.5 ml-7 w-[34px] h-[42px]">
      <path d="M1 13l5-5h14v15l-4 5H1z" fill="#d6d6d6" stroke="#777" strokeWidth="1.300" />
      <g fill="none" stroke="#777" strokeWidth="1.500"><ellipse cx="8" cy="20" rx="5" ry="3" transform="rotate(-45 8 20)" /><ellipse cx="14" cy="15" rx="5" ry="3" transform="rotate(-45 14 15)" /></g>
      <path d="M10.500 32h2v9h-2z" fill="#ccc" />
      <path d="M18 0h15v5l-5 5h-1.500v31h-3V10H23l-5-5z" fill="#666" />
    </svg>
    <button aria-label="Timeline settings" className="ml-auto"><Gear className="text-[#999]" /></button>
  </footer>
);

/* ---------- taskbar, icons on a 30 x 30 grid ---------- */

const taskApps: { name: string; open?: boolean; active?: boolean; art: React.ReactNode }[] = [
  { name: "Cortana", art: <circle cx="15" cy="15" r="8.500" fill="none" stroke="#000" strokeWidth="2.500" /> },
  { name: "Task view", art: <g fill="none" stroke="#000" strokeWidth="1.200"><path d="M5 6v3h12V6M5 24v-3h12v3M5 11h12v8H5zM23 5v5M23 16v8" /><path d="M21.500 11.500h3v3h-3z" fill="#000" stroke="none" /></g> },
  { name: "File Explorer", open: true, art: <g><path d="M1 3h11l2 3h12v3H1z" fill="#dc9a14" /><path d="M1 6h11l3-2h13v21H1z" fill="#ffd05c" /><path d="M6 26V17q0-2 2-2h14q2 0 2 2v9h-5v-5h-8v5z" fill="#3b93dc" /></g> },
  { name: "Edge", art: <g><defs><linearGradient id="edge" x1="0" x2="1"><stop stopColor="#28aee8" /><stop offset=".6" stopColor="#35c7c0" /><stop offset="1" stopColor="#6ce35a" /></linearGradient></defs><circle cx="15" cy="15" r="15" fill="#1380cf" /><path d="M0 14C1 5 8 0 15 0c9 0 15 6 15 12 0 6-5 8-9 8-4 0-5-2-3-4 1-6-4-8-8-8-5 0-9 3-10 6z" fill="url(#edge)" /><path d="M11 14c-1 8 5 12 11 10 3-1 5-2 6-2-4 7-11 9-16 8-6-4-6-12-1-16z" fill="#124f9c" /><path d="M12 15c2-5 7-3 6 1-2 2-1 4 3 4 3 0 6-1 9-5v7h-3c-5 3-13 2-15-7z" fill="#f1ddd3" /></g> },
  { name: "Studio", art: <g><path d="M0 0h30v30H0z" fill="#2a2644" /><path d="M18 4l-7 8 2 4 5-4z" fill="#3a7be0" /><path d="M13 12l7 5-8 8 3-7-4-5z" fill="#35c5f0" /></g> },
  { name: "Microsoft Store", art: <g><path d="M8 9V2h14v7" fill="none" stroke="#252525" strokeWidth="3" /><path d="M0 8h29v20q0 2-2 2H2q-2 0-2-2z" fill="#303030" /><path d="M9 14h5v5H9z" fill="#f25022" /><path d="M15 14h5v5h-5z" fill="#7fba00" /><path d="M9 20h5v5H9z" fill="#00a4ef" /><path d="M15 20h5v5h-5z" fill="#ffb900" /></g> },
  { name: "Mail", art: <g><path d="M0 10 15 1l15 9z" fill="#0a5ca8" /><path d="M3 10h24L15 22z" fill="#f2f2f2" /><path d="M0 10l30 19H0z" fill="#1f9de4" /><path d="M30 10v19L15 19.500z" fill="#36c2f4" /><path d="M0 29l15-9.500L30 29z" fill="#22a8ec" /></g> },
  { name: "Word", art: <g><path d="M7 1h22v8H7z" fill="#41a5ee" /><path d="M7 8h22v7H7z" fill="#2b7cd3" /><path d="M7 15h22v7H7z" fill="#185abd" /><path d="M7 22h22v7H7z" fill="#103f91" /><rect x="0" y="7" width="15" height="16" rx="1" fill="#185abd" /><text x="7.500" y="19" fontSize="12" fontWeight="bold" fill="#fff" textAnchor="middle" fontFamily="Open Sans, sans-serif">W</text></g> },
  { name: "Chrome", open: true, art: <g><circle cx="15" cy="15" r="14" fill="#ffcd40" /><path d="M15 1A14 14 0 0 1 27 8H15a7 7 0 0 0-6 4L3 8A14 14 0 0 1 15 1z" fill="#db4437" /><path d="M3 8l6 11a7 7 0 0 0 8 3l-4 7A14 14 0 0 1 3 8z" fill="#0f9d58" /><circle cx="15" cy="15" r="6.500" fill="#fff" /><circle cx="15" cy="15" r="5.200" fill="#4285f4" /></g> },
  { name: "Spotify", art: <g><path d="M0 0h30v30H0z" fill="#1ed760" /><circle cx="15" cy="15" r="7.500" fill="#fff" /><path d="M10.500 12.500q5-1.500 9 1M11 15.500q4-1.200 7.500.8M11.500 18q3.500-1 6 .7" stroke="#1ed760" strokeWidth="1.400" fill="none" /></g> },
  { name: "Zoom", art: <g><rect x="1" y="1" width="28" height="28" rx="9" fill="#4a8cff" /><path d="M6 10h10q3 0 3 3v7H9q-3 0-3-3zM20 13l4-3v10l-4-3z" fill="#fff" /></g> },
  { name: "Discord", art: <g><path d="M6 3h18q3 0 3 3v22l-4-4H6q-3 0-3-3V6q0-3 3-3z" fill="#6c7fc4" /><path d="M9 10q6-2.500 12 0 2 4 2 8-2 2-4 2l-1-2h-6l-1 2q-2 0-4-2 0-4 2-8z" fill="#fff" /><circle cx="12.500" cy="15" r="1.500" fill="#6c7fc4" /><circle cx="17.500" cy="15" r="1.500" fill="#6c7fc4" /></g> },
  { name: "Fusion 360", open: true, active: true, art: <g><path d="M1 1h28v28H1z" fill="#fbe3cf" /><path d="M1 29V14l16 15z" fill="#f9cfa8" /><path d="M9 4l3-1h11v5h-9v3h8v4h-8v7H9z" fill="#e08a3a" /><path d="M9 4l3 2v14l-3 2z" fill="#a05018" /><text x="21" y="27.500" fontSize="7" fill="#e0772a" textAnchor="middle" fontFamily="Liberation Sans, sans-serif">360</text></g> },
  { name: "Photos", open: true, art: <g><path d="M1 1h28v28H1z" fill="#28a8ea" /><path d="M14 20l8-8 7 8v9H14z" fill="#4f7fd8" /><path d="M1 22l9-10 17 17H1z" fill="#123f73" /><circle cx="20" cy="7.500" r="2.500" fill="#fff" /></g> },
  { name: "Teams", open: true, art: <g><circle cx="16" cy="6" r="5" fill="#7b83eb" /><circle cx="25" cy="7" r="3.500" fill="#5059c9" /><path d="M20 12h9v9q-3 6-9 4z" fill="#5059c9" /><path d="M9 12h14v11q-4 8-11 4-3-3-3-6z" fill="#7b83eb" /><rect y="7" width="16" height="16" rx="1" fill="#4b53bc" /><text x="8" y="19.500" fontSize="12" fontWeight="bold" fill="#fff" textAnchor="middle" fontFamily="Open Sans, sans-serif">T</text><circle cx="24" cy="24" r="6" fill="#6bb700" stroke="#fff" /><path d="M21 24l2.500 2.500L27 22" stroke="#fff" strokeWidth="1.800" fill="none" /></g> },
];

const Taskbar = () => (
  <footer className="flex h-[50px] items-stretch bg-[linear-gradient(90deg,#efd8de_0%,#ecd6dc_27%,#f1ddd3_33%,#f0dad2_62%,#e5d2d8_72%,#e6d2d5_76%,#cfe2ea_79%,#c8eaec_88%,#cfe6ee_100%)] font-['Open_Sans',sans-serif] text-black">
    <button aria-label="Start" className="grid w-[60px] place-items-center">
      <svg viewBox="0 0 20 20" className="w-5 h-5"><path d="M0 3l8.500-1.200V9.500H0zM9.500 1.600 20 0v9.500H9.500zM0 10.500h8.500v7.700L0 17zM9.500 10.500H20V20L9.500 18.400z" /></svg>
    </button>
    <label className="flex w-[429px] items-center gap-[15px] border border-[#c8c8c8] bg-white pl-3.5">
      <svg viewBox="0 0 20 20" className="w-5 h-5" fill="none" stroke="#222" strokeWidth="1.500"><circle cx="13" cy="7" r="6" /><path d="M8.500 11.500 1 19" /></svg>
      <input type="text" aria-label="Buscar" placeholder="Escribe aquí para buscar" className="w-[320px] text-lg placeholder:text-[#333] outline-none" />
    </label>
    <div className="flex">
      {taskApps.map((a) => (
        <button key={a.name} aria-label={a.name} className={`relative grid w-[62px] place-items-center ${a.active ? "bg-white/55" : ""}`}>
          <svg viewBox="0 0 30 30" className="w-[30px] h-[30px]">{a.art}</svg>
          {a.open && <span className={`absolute bottom-0 h-[3px] bg-[#4c4848] ${a.active ? "inset-x-0" : "inset-x-[5px]"}`} />}
        </button>
      ))}
    </div>
    <div className="ml-auto flex items-center">
      <svg viewBox="0 0 28 28" className="w-7 h-7"><circle cx="13" cy="13" r="12.500" fill="#fff" /><circle cx="13" cy="13" r="10.500" fill="#0a94d6" /><text x="13" y="19.500" fontSize="19" fontWeight="bold" fill="#fff" textAnchor="middle" fontFamily="Open Sans, sans-serif">?</text><circle cx="22" cy="19" r="6" fill="#f8a81c" /><path d="M22 18v4M22 15v1.500" stroke="#fff" strokeWidth="2" /></svg>
      <svg viewBox="0 0 16 10" className="ml-[14px] w-4 h-2.5" fill="none" stroke="#000" strokeWidth="1.500"><path d="M1 9l7-7 7 7" /></svg>
      <svg viewBox="0 0 20 14" className="ml-3 w-5 h-3.5" fill="none" stroke="#000" strokeWidth="1.300"><path d="M6 2.500h12v10H4V8M18.500 6v3h1V6zM1 1v4h4V1M3 5v4" /><path d="M8 5h5v5H6V7z" fill="#000" /></svg>
      <svg viewBox="0 0 20 14" className="ml-2.5 w-5 h-3.5" stroke="#444"><path d="M4 13q-4-1-3.500-4T5 5q3-6 9-3 2 1 2.500 4 3 1 3 4t-3 3z" fill="#8a8a8a" /><path d="M4 13q-2-2 0-3l6-2q3-1 6 5z" fill="#f4f4f4" stroke="none" /></svg>
      <svg viewBox="0 0 18 18" className="ml-3 w-[18px] h-[18px]" fill="none" stroke="#000" strokeWidth="1.200"><path d="M1.500 16Q3 3 16 2M5 16Q6 7 16 6M9 16q1-6 7-6" /><circle cx="14.500" cy="15" r="1.600" fill="#000" stroke="none" /></svg>
      <svg viewBox="0 0 20 18" className="ml-2.5 w-5 h-[18px]" fill="none" stroke="#000" strokeWidth="1.200"><path d="M.5 6.500h3l4-4v13l-4-4h-3zM10.500 7q1.500 2 0 4M13.500 5q3 4 0 8" /><path d="M16.500 2.500q4 6.500 0 13" stroke="#889" /></svg>
      <span className="ml-4 text-[13px]">ESP</span>
      <div className="ml-6 text-center text-sm leading-[23px]"><div>17:15</div><div>7/04/2021</div></div>
      <button aria-label="Notifications" className="ml-7">
        <svg viewBox="0 0 21 21" className="w-[21px] h-[21px]" fill="none" stroke="#000" strokeWidth="1.300"><path d="M1 1h19v15h-7l-2.500 3L8 16H1z" /></svg>
      </button>
      <span className="ml-6 h-[50px] w-[6px] border-l border-[#98aab2]" />
    </div>
  </footer>
);

export default function App() {
  return (
    <div className="flex min-h-screen flex-col overflow-hidden font-['Liberation_Sans',sans-serif]">
      <TitleBar />
      <div className="flex flex-1">
        <DataPanel />
        <div className="flex min-w-0 flex-1 flex-col">
          <TabBar />
          <Ribbon />
          <Viewport />
          <Timeline />
        </div>
      </div>
      <Taskbar />
    </div>
  );
}
